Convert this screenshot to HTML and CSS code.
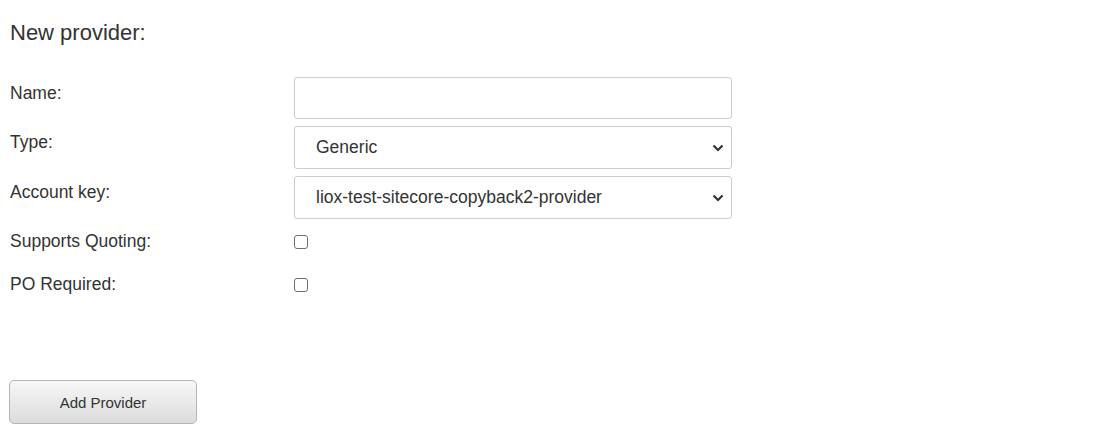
FILE: index.html
```html
<!DOCTYPE html>
<html>
<head>
<meta charset="utf-8">
<link rel="stylesheet" href="styles.css">
</head>
<body>
<div class="page">
  <h2 class="title">New provider:</h2>
  <div class="form">
    <label class="lbl">Name:</label>
    <div class="field"><input class="ctl" type="text"></div>
    <label class="lbl">Type:</label>
    <div class="field"><div class="ctl sel"><span>Generic</span><svg class="chev" viewBox="0 0 12 8" width="12" height="8"><path d="M1.5 1.5 L6 6 L10.5 1.5" fill="none" stroke="#333" stroke-width="2.2"/></svg></div></div>
    <label class="lbl">Account key:</label>
    <div class="field"><div class="ctl sel"><span>liox-test-sitecore-copyback2-provider</span><svg class="chev" viewBox="0 0 12 8" width="12" height="8"><path d="M1.5 1.5 L6 6 L10.5 1.5" fill="none" stroke="#333" stroke-width="2.2"/></svg></div></div>
    <label class="lbl cb-lbl">Supports Quoting:</label>
    <div class="field cb-field"><span class="cb"></span></div>
    <label class="lbl cb-lbl">PO Required:</label>
    <div class="field cb-field"><span class="cb"></span></div>
  </div>
  <button class="btn">Add Provider</button>
</div>
</body>
</html>
```
FILE: styles.css
```css
html, body { margin: 0; padding: 0; background: #fff; }
body { font-family: "Liberation Sans", Arial, sans-serif; color: #333; }
.page { padding: 0 0 0 10px; }
.title { margin: 0; padding-top: 20px; font-size: 22px; font-weight: normal; line-height: 26px; height: 57px; box-sizing: content-box; }
.form { display: grid; grid-template-columns: 284px 438px; row-gap: 7px; }
.lbl { font-size: 17.5px; line-height: 20px; padding-top: 6px; }
.ctl { box-sizing: border-box; width: 438px; height: 42px; border: 1px solid #ccc; border-radius: 3px; background: #fff; display: block; margin: 0; }
.sel { height: 43px; display: flex; align-items: center; justify-content: space-between; padding: 0 7px 0 21px; font-size: 17.5px; }
.chev { display: block; margin-top: 1px; }
.cb-lbl { padding-top: 5px; height: 31px; }
.cb-field { padding-top: 9px; height: 27px; }
.cb { display: block; width: 12px; height: 12px; border: 1px solid #707070; border-radius: 3px; background: #fff; }
.btn { display: block; margin-top: 75px; margin-left: -1px; width: 188px; height: 44px; border: 1px solid #b5b5b5; border-radius: 5px; background: linear-gradient(#f7f7f7, #dcdcdc); font-family: "Liberation Sans", Arial, sans-serif; font-size: 15px; color: #333; padding: 0; }
```
